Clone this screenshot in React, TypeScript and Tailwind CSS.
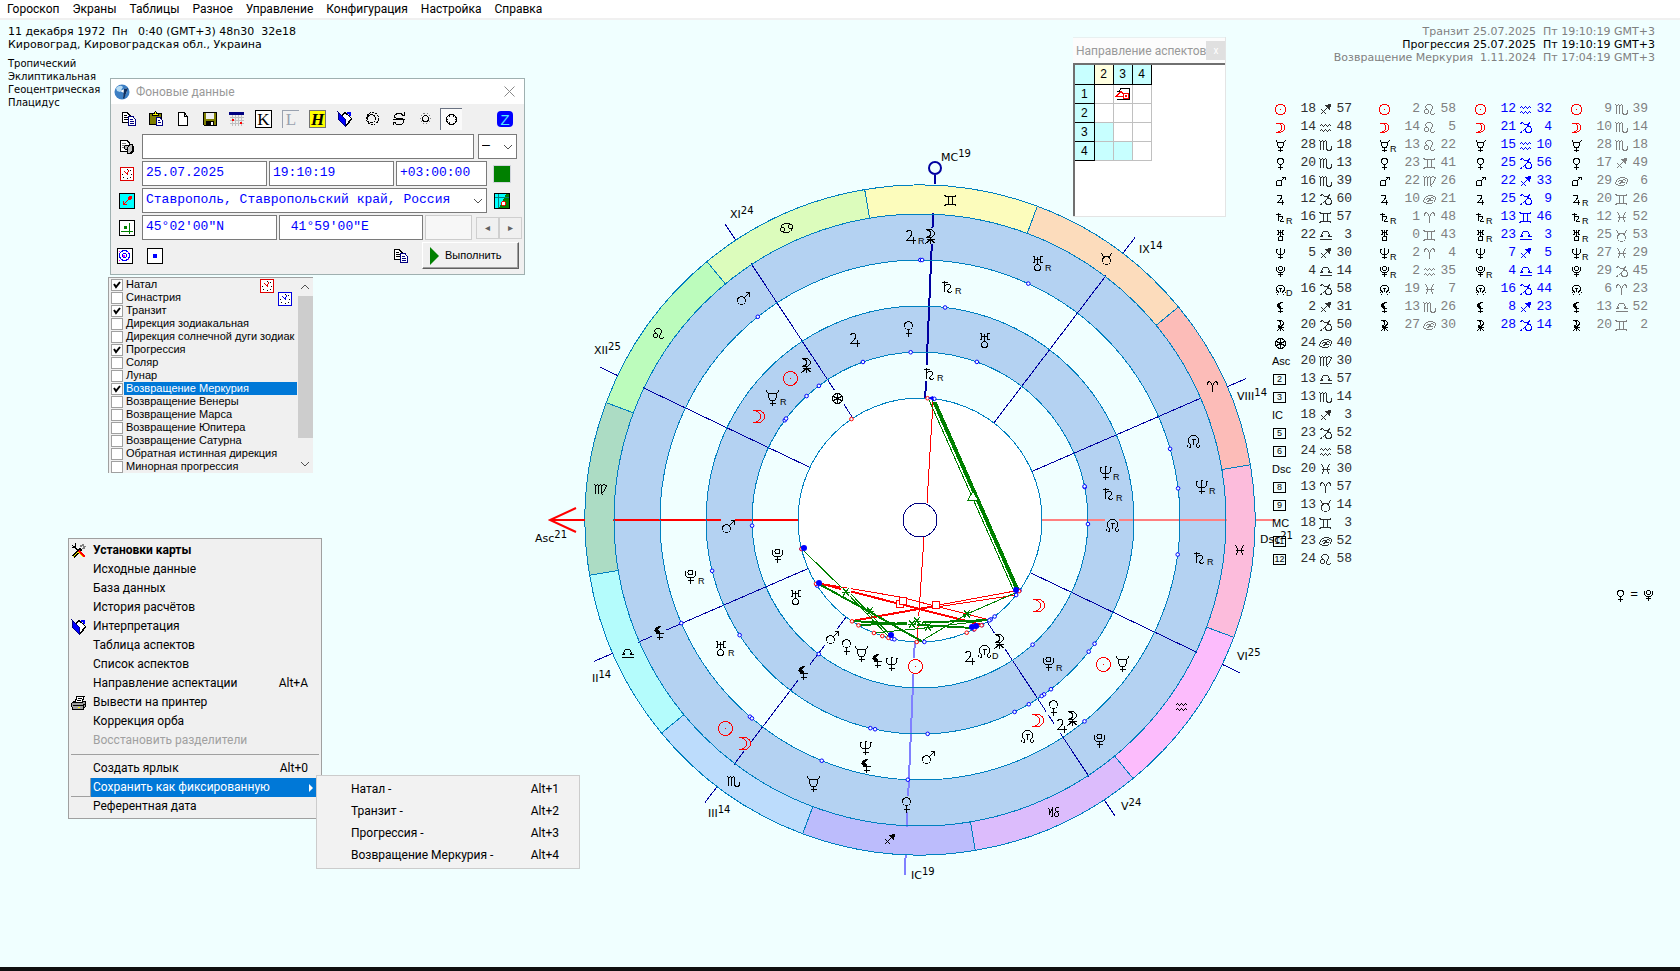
import type { ReactNode } from "react";

type Row = [planet: string, deg: number, sign: string, min: number, mark?: string];
type Placed = [glyph: string, x: number, y: number, mark?: string];

const SIGNS = ["aries", "taurus", "gemini", "cancer", "leo", "virgo", "libra", "scorpio", "sagittarius", "capricorn", "aquarius", "pisces"];

const SIGN_COLORS = [
  "#fcbcb8", "#fcdcbc", "#fcfcbc", "#dcfcbc", "#bcfcbc", "#acdcc4",
  "#b4fcfc", "#bcdcfc", "#bcbcfc", "#dcbcfc", "#fcbcfc", "#fcbcdc",
];

const GLYPHS: Record<string, ReactNode> = {
  sun: <><circle r="7" /><rect x="-0.500" y="-0.500" width="1" height="1" fill="currentColor" stroke="none" /></>,
  moon: <path d="M-6 -6H0A6 6 0 0 1 0 6H-6M-6 -6H-3Q2 -4 2 0Q2 4 -3 6" />,
  mercury: <path d="M-6 -8V-6L-4 -4H4L6 -6V-8M-4 -4V0L-2 3H2L4 0V-4M0 3V8M-3 6H3" />,
  venus: <><circle cy="-3" r="4" /><path d="M0 1V8M-3 5H3" /></>,
  mars: <><circle cx="-2" cy="2" r="4" /><path d="M1 -1L6 -6M2 -6H6V-2" /></>,
  jupiter: <path d="M-4 -4L-3 -6H0L1 -5V-2L0 0L-4 4H5M3 0V7" />,
  saturn: <path d="M-3 -6V5M-6 -4H0M-3 0L-1 -2H2L3 -1V1L0 4V5L2 6L5 5" />,
  uranus: <><circle cy="4" r="3" /><path d="M-5 -7H-3V-1H-5M5 -7H3V-1H5M-3 -4H3M0 -7V1" /></>,
  neptune: <path d="M-6 -5H-4M4 -5H6M-1 -6H1M-5 -6V-1L-3 1H3L5 -1V-6M0 -7V7M-3 5H3" />,
  pluto: <><circle cy="-4" r="2.500" /><path d="M-5 -6V-1L-3 1H3L5 -1V-6M0 1V7M-3 4H3" /></>,
  node: <><path d="M-3 5V3L-5 1V-3L-2 -6H2L5 -3V1L3 3V5M-5 6H-3M3 6H5M-6 5V3M6 5V3M-2 -2H2M0 -2V3" /></>,
  lilith: <><path d="M4 -7H0L-4 -5L-5 -2L-3 1L0 2L4 1L1 0L-1 -3L1 -6Z" fill="currentColor" stroke="none" /><path d="M0 1V7M-3 5H3" /></>,
  chiron: <path d="M-4 -7H1L4 -4V-2L1 1H-4M-4 -7L0 -5V-1L-4 1M0 1V7M-4 3H4M-5 7L0 3L5 7" />,
  fortune: <><circle r="5" /><path d="M0 -5V5M-4 -2L4 2M-4 2L4 -2" /></>,
  aries: <path d="M-5 -2V-3L-4 -5H-3L-1 -3L0 0V5M0 0L1 -3L3 -5H4L5 -3V-2" />,
  taurus: <><circle cy="2" r="4" /><path d="M-5 -5L-3 -2H3L5 -5" /></>,
  gemini: <path d="M-6 -5L-4 -4H4L6 -5M-6 5L-4 4H4L6 5M-2 -4V4M2 -4V4" />,
  cancer: <><circle cx="-4" cy="2" r="2" /><circle cx="4" cy="-1" r="2" /><path d="M-6 0L-4 -3L-1 -4H3L6 -2M6 1L4 4L1 5H-3L-6 3" /></>,
  leo: <><circle cx="-3" cy="2" r="2" /><path d="M-2 0L-4 -2V-3L-2 -5H1L3 -3V-1L1 2V4L2 5H4L5 4" /></>,
  virgo: <path d="M-6 -5L-5 -4V4M-5 -3L-3 -5L-2 -4V4M-2 -3L0 -5L1 -4V4L3 6M1 -3L3 -5L6 -4L4 1L0 5" />,
  libra: <path d="M-6 4H6M-6 1H-3L-4 -1L-2 -4H2L4 -1L3 1H6" />,
  scorpio: <path d="M-6 -5L-5 -4V4M-5 -3L-3 -5L-2 -4V4M-2 -3L0 -5L1 -4V3L2 5H4L6 4V1M5 2L6 1L7 2" />,
  sagittarius: <><path d="M-5 5L4 -4M-4 0L1 5" /><path d="M0 -4L5 -5L4 0Z" fill="currentColor" /></>,
  capricorn: <path d="M-6 -4H-5L-4 -3V2L-1 -5V3L-2 5M5 -5H3L2 -4V-2L5 1V3L4 4H2L1 3V1L3 -1H5" />,
  seagoat: <><path d="M-5 -4L-3 -5L-1 -3H2L4 -5L2 -1L-3 4L-5 5H-6M2 -1H5" /><circle cx="3" cy="2" r="3" /></>,
  crab: <path d="M-6 1L-4 -2L-1 -4H3L6 -2V0L4 3L1 4H-3L-6 2ZM-4 1L-2 -1H0V1L-2 2M5 -1L2 -2L1 -1V1H3" />,
  aquarius: <path d="M-6 -1L-4 -3L-2 -1L0 -3L2 -1L4 -3L6 -1M-6 4L-4 2L-2 4L0 2L2 4L4 2L6 4" />,
  pisces: <path d="M-4 -5L-2 -2V2L-4 5M4 -5L2 -2V2L4 5M-4 0H4" />,
};

const natal: Row[] = [
  ["sun", 18, "sagittarius", 57], ["moon", 14, "aquarius", 48], ["mercury", 28, "scorpio", 18],
  ["venus", 20, "scorpio", 13], ["mars", 16, "scorpio", 39], ["jupiter", 12, "capricorn", 60],
  ["saturn", 16, "gemini", 57, "R"], ["uranus", 22, "libra", 3], ["neptune", 5, "sagittarius", 30],
  ["pluto", 4, "libra", 14], ["node", 16, "capricorn", 58, "D"], ["lilith", 2, "sagittarius", 31],
  ["chiron", 20, "capricorn", 50], ["fortune", 24, "cancer", 40],
];

const houses: Row[] = [
  ["Asc", 20, "virgo", 30], ["2", 13, "libra", 57], ["3", 13, "scorpio", 14], ["IC", 18, "sagittarius", 3],
  ["5", 23, "capricorn", 52], ["6", 24, "aquarius", 58], ["Dsc", 20, "pisces", 30], ["8", 13, "aries", 57],
  ["9", 13, "taurus", 14], ["MC", 18, "gemini", 3], ["11", 23, "cancer", 52], ["12", 24, "leo", 58],
];

const transit: Row[] = [
  ["sun", 2, "leo", 58], ["moon", 14, "leo", 5], ["mercury", 13, "leo", 22, "R"], ["venus", 23, "gemini", 41],
  ["mars", 22, "virgo", 26], ["jupiter", 10, "cancer", 21], ["saturn", 1, "aries", 48, "R"],
  ["uranus", 0, "gemini", 43], ["neptune", 2, "aries", 4, "R"], ["pluto", 2, "aquarius", 35, "R"],
  ["node", 19, "pisces", 7], ["lilith", 13, "scorpio", 26], ["chiron", 27, "cancer", 30],
];

const progression: Row[] = [
  ["sun", 12, "aquarius", 32], ["moon", 21, "capricorn", 4], ["mercury", 15, "aquarius", 10],
  ["venus", 25, "capricorn", 56], ["mars", 22, "sagittarius", 33], ["jupiter", 25, "capricorn", 9],
  ["saturn", 13, "gemini", 46, "R"], ["uranus", 23, "libra", 3, "R"], ["neptune", 7, "sagittarius", 5],
  ["pluto", 4, "libra", 14, "R"], ["node", 16, "capricorn", 44], ["lilith", 8, "sagittarius", 23],
  ["chiron", 28, "capricorn", 14],
];

const mercuryReturn: Row[] = [
  ["sun", 9, "scorpio", 39], ["moon", 10, "scorpio", 14], ["mercury", 28, "scorpio", 18],
  ["venus", 17, "sagittarius", 49], ["mars", 29, "cancer", 6], ["jupiter", 20, "gemini", 26, "R"],
  ["saturn", 12, "pisces", 52, "R"], ["uranus", 25, "taurus", 53, "R"], ["neptune", 27, "pisces", 29, "R"],
  ["pluto", 29, "capricorn", 45], ["node", 6, "aries", 23], ["lilith", 13, "libra", 52],
  ["chiron", 20, "gemini", 2],
];

const chartPlanets: Placed[] = [
  ["mars", 743, 298], ["sun", 790, 378], ["chiron", 806, 365], ["mercury", 772, 397, "R"], ["moon", 758, 416],
  ["jupiter", 854, 339], ["venus", 908, 328], ["fortune", 837, 398], ["saturn", 929, 373, "R"],
  ["jupiter", 910, 236, "R"], ["chiron", 930, 236], ["mars", 728, 526], ["saturn", 947, 286, "R"],
  ["uranus", 1037, 263, "R"], ["uranus", 984, 340], ["node", 1193, 441], ["neptune", 1105, 472, "R"],
  ["saturn", 1108, 493, "R"], ["node", 1112, 525], ["neptune", 1201, 486, "R"], ["pluto", 777, 555],
  ["pluto", 690, 576, "R"], ["uranus", 795, 597], ["lilith", 659, 632], ["uranus", 720, 648, "R"],
  ["mars", 832, 637], ["venus", 846, 646], ["mercury", 861, 653], ["lilith", 877, 660], ["neptune", 891, 663],
  ["lilith", 803, 672], ["sun", 915, 666], ["sun", 725, 728], ["moon", 744, 743], ["neptune", 865, 747],
  ["lilith", 866, 765], ["mercury", 813, 783], ["mars", 928, 757], ["venus", 906, 804], ["moon", 1038, 605],
  ["jupiter", 969, 657], ["node", 984, 651, "D"], ["chiron", 999, 641], ["pluto", 1048, 663, "R"],
  ["sun", 1103, 664], ["mercury", 1122, 663], ["venus", 1053, 707], ["moon", 1037, 720], ["node", 1027, 736],
  ["jupiter", 1061, 725], ["chiron", 1072, 718], ["pluto", 1099, 740], ["saturn", 1199, 557, "R"],
];

const cuspLabels: [string, string, number, number][] = [
  ["MC", "19", 941, 161], ["XI", "24", 730, 218], ["XII", "25", 594, 354], ["Asc", "21", 535, 542],
  ["II", "14", 592, 682], ["III", "14", 708, 817], ["IC", "19", 911, 879], ["V", "24", 1121, 810],
  ["VI", "25", 1237, 660], ["Dsc", "21", 1260, 543], ["VIII", "14", 1237, 400], ["IX", "14", 1139, 253],
];

const CX = 920;
const CY = 520;
const RED = "#ff0000";

const longitude = ([, deg, sign, min]: Row) => SIGNS.indexOf(sign) * 30 + deg + min / 60;
const ASC = longitude(houses[0]);

// ecliptic longitude + radius to chart coordinates, Asc on the left
function point(lon: number, r: number) {
  const a = ((180 + lon - ASC) * Math.PI) / 180;
  return { x: CX + r * Math.cos(a), y: CY - r * Math.sin(a) };
}

function ringColor(x: number, y: number) {
  const r = Math.hypot(x - CX, y - CY);
  return (r > 260 && r < 306) || (r > 168 && r < 214) ? "#b4d2f2" : "#f0ffff";
}

function glyphColor(name: string) {
  return name === "sun" || name === "moon" ? RED : "#000000";
}

function Glyph({ name, x = 0, y = 0, scale = 1, color }: { name: string; x?: number; y?: number; scale?: number; color: string }) {
  return (
    <g
      transform={`translate(${x + 0.5} ${y + 0.5}) scale(${scale})`}
      fill="none"
      stroke="currentColor"
      color={color}
      strokeWidth={1 / scale}
    >
      {GLYPHS[name]}
    </g>
  );
}

function Chart() {
  const rings: [number, string][] = [[306, "#b4d2f2"], [260, "#f0ffff"], [214, "#b4d2f2"], [168, "#f0ffff"], [122, "#ffffff"]];
  const dots: [Row[], number, string][] = [
    [mercuryReturn, 260, "#0000ff"], [progression, 214, "#0000ff"], [transit, 168, "#0000ff"],
    [progression, 122, "#0000ff"], [natal, 122, RED],
  ];

  return (
    <svg viewBox="540 20 720 860" className="h-[860px] min-w-0 flex-1 overflow-visible" role="img" aria-label="Карта">
      {/* zodiac belt */}
      {SIGNS.map((sign, i) => {
        const a = point(i * 30, 335);
        const b = point(i * 30 + 30, 335);
        return (
          <path
            key={sign}
            d={`M${CX} ${CY}L${a.x} ${a.y}A335 335 0 0 0 ${b.x} ${b.y}Z`}
            fill={SIGN_COLORS[i]}
            stroke="#0080c0"
            shapeRendering="crispEdges"
          />
        );
      })}
      {rings.map(([r, fill]) => <circle key={r} cx={CX} cy={CY} r={r} fill={fill} />)}

      {/* house cusps */}
      {houses.map((house) => {
        const lon = longitude(house);
        const inner = point(lon, 122);
        const outer = point(lon, 307);
        const t1 = point(lon, 335);
        const t2 = point(lon, 355);
        const axis: Record<string, string> = { Asc: RED, Dsc: "#ff8080", IC: "#8080ff", MC: "#0000a0" };
        const stroke = axis[house[0]] ?? "#0000a0";
        return (
          <g key={house[0]} stroke={stroke} strokeWidth={axis[house[0]] ? 2 : 1} shapeRendering="crispEdges">
            <line x1={inner.x} y1={inner.y} x2={outer.x} y2={outer.y} />
            {!["Asc", "Dsc", "MC"].includes(house[0]) && <line x1={t1.x} y1={t1.y} x2={t2.x} y2={t2.y} />}
          </g>
        );
      })}
      <path d="M585 520H550M576 508L550 520L576 532" fill="none" stroke={RED} strokeWidth="2" />
      <path d="M1256 520H1276" stroke="#ff8080" strokeWidth="2" />
      <g fill="none" stroke="#0000a0" strokeWidth="2">
        <circle cx="935" cy="168" r="6" />
        <path d="M935 175V184" />
      </g>

      {chartPlanets.map(([name, x, y]) => (
        <rect key={`${x}-${y}`} x={x - 7} y={y - 8} width="14" height="16" fill={ringColor(x, y)} />
      ))}

      <g fill="none" stroke="#0080c0" shapeRendering="crispEdges">
        {rings.map(([r]) => <circle key={r} cx={CX} cy={CY} r={r} />)}
      </g>
      <circle cx={CX} cy={CY} r="17" fill="none" stroke="#000080" shapeRendering="crispEdges" />

      {/* aspects */}
      <g fill="none" stroke={RED} shapeRendering="crispEdges">
        <path d="M933 402L927 503M924 537L917 642" />
        <path d="M818 583L982 625" strokeWidth="2" />
        <path d="M818 583L900 597L990 620M928 607L1015 591M930 608L1016 595" />
        <path d="M852 621L924 608L940 605" strokeWidth="2" />
      </g>
      <g fill="none" stroke="#008000" shapeRendering="crispEdges">
        <path d="M935 402L1018 590" strokeWidth="3" />
        <path d="M929 400L1013 589M932 400L1016 590" />
        <path d="M803 550L846 592L888 636M849 592L893 638M923 640L967 614L1015 593M874 633L925 628L990 620" />
        <path d="M819 584L870 612L923 642" strokeWidth="2" />
        <path d="M852 621L973 628M858 625L989 620" strokeWidth="2" />
      </g>
      <g fill="#ffffff" stroke="none">
        {[[846, 592], [912, 624], [917, 620]].map(([x, y]) => (
          <rect key={x} x={x - 5} y={y - 4} width="10" height="8" />
        ))}
      </g>
      <g fill="#ffffff" stroke="#008000" shapeRendering="crispEdges">
        <path d="M968 500L973 491L978 500Z" />
        {[[846, 592], [870, 611], [912, 624], [917, 621], [967, 614], [928, 627]].map(([x, y]) => (
          <path key={x} d={`M${x - 4} ${y}H${x + 4}M${x - 3} ${y - 4}L${x + 3} ${y + 4}M${x - 3} ${y + 4}L${x + 3} ${y - 4}`} />
        ))}
      </g>
      <g fill="#ffffff" stroke={RED} shapeRendering="crispEdges">
        <rect x="896" y="600" width="7" height="7" />
        <rect x="899" y="597" width="7" height="7" />
        <rect x="932" y="601" width="7" height="7" />
      </g>

      {dots.map(([rows, r, color]) =>
        rows.map((row) => {
          const p = point(longitude(row), r);
          return <circle key={`${r}${color}${row[0]}`} cx={p.x} cy={p.y} r="1.800" fill="#f0ffff" stroke={color} />;
        })
      )}
      <g fill="#0000ff">
        {[[804, 548], [819, 583], [891, 635], [1016, 590], [972, 627], [976, 626]].map(([x, y]) => (
          <circle key={x} cx={x} cy={y} r="3" />
        ))}
        <path d="M928 398L933 396L934 401Z" />
      </g>

      {/* glyphs */}
      <g shapeRendering="crispEdges">
        {SIGNS.map((sign, i) => {
          const p = point(i * 30 + 15, 321);
          return <Glyph key={sign} name={sign} x={Math.floor(p.x)} y={Math.floor(p.y)} color="#000000" />;
        })}
        {chartPlanets.map(([name, x, y]) => <Glyph key={`${x}-${y}`} name={name} x={x} y={y} color={glyphColor(name)} />)}
      </g>
      <g className="font-['Liberation_Sans',sans-serif] text-[9px]">
        {chartPlanets.map(([, x, y, mark]) => mark && <text key={`${x}-${y}`} x={x + 8} y={y + 8}>{mark}</text>)}
      </g>
      <g className="font-['DejaVu_Sans',sans-serif] text-[11px]">
        {cuspLabels.map(([label, deg, x, y]) => (
          <text key={label} x={x} y={y}>
            {label}
            <tspan dy="-4" className="text-[10px]">{deg}</tspan>
          </text>
        ))}
      </g>
    </svg>
  );
}

function RowName({ name, mark }: { name: string; mark?: string }) {
  if (GLYPHS[name]) {
    return (
      <svg viewBox="-8 -9 24 18" className="h-[18px] w-6" shapeRendering="crispEdges">
        <Glyph name={name} scale={name === "fortune" ? 1 : 0.75} color={glyphColor(name)} />
        {mark && <text x="6" y="7" className="font-['Liberation_Sans',sans-serif] text-[9px]">{mark}</text>}
      </svg>
    );
  }
  if (/^\d/.test(name)) {
    return (
      <span className="ml-px flex w-[13px] justify-center border border-black text-[9px] leading-[9px]">{name}</span>
    );
  }
  return <span className="block text-[11px]">{name}</span>;
}

function PositionTable({ rows, color, title }: { rows: Row[]; color: string; title: string }) {
  return (
    <table aria-label={title} className="w-24 shrink-0 table-fixed border-collapse font-['Liberation_Sans',sans-serif] leading-[18px]">
      <tbody>
        {rows.map(([name, deg, sign, min, mark]) => (
          <tr key={name} className="h-[18px]">
            <th scope="row" className="w-6 p-0 text-left font-normal whitespace-nowrap">
              <RowName name={name} mark={mark} />
            </th>
            <td className={`w-5 p-0 text-right font-['Liberation_Mono',monospace] text-[13px] ${color}`}>{deg}</td>
            <td className={`w-[18px] p-0 ${color}`}>
              <svg viewBox="-9 -9 18 18" className="size-[18px]" shapeRendering="crispEdges">
                <Glyph name={sign === "capricorn" ? "seagoat" : sign === "cancer" ? "crab" : sign} color="currentColor" />
              </svg>
            </td>
            <td className={`w-[18px] p-0 text-right font-['Liberation_Mono',monospace] text-[13px] ${color}`}>{min}</td>
            <td className="p-0" />
          </tr>
        ))}
      </tbody>
    </table>
  );
}

/* icons */
function Icon({ children }: { children: ReactNode }) {
  return <svg viewBox="0 0 16 16" className="size-4 shrink-0" fill="none" stroke="#000000" shapeRendering="crispEdges">{children}</svg>;
}

const CopyIcon = () => (
  <Icon>
    <path d="M1.500 1.500H6L9 4.500V11.500H1.500Z" fill="#ffffff" />
    <path d="M3 4.500H6M3 6.500H7M3 8.500H7" />
    <path d="M7.500 5.500H12L14.500 8.500V14.500H7.500Z" fill="#ffffff" stroke="#000080" />
    <path d="M9 8.500H12M9 10.500H13M9 12.500H13" stroke="#000080" />
  </Icon>
);
const PasteIcon = () => (
  <Icon>
    <rect x="1.500" y="2.500" width="12" height="11" fill="#808000" />
    <path d="M4.500 4.500V2.500H6L7.500 0.500L9 2.500H10.500V4.500Z" fill="#ffff00" />
    <path d="M8.500 6.500H12L14.500 9.500V14.500H8.500Z" fill="#ffffff" stroke="#000080" />
    <path d="M10 9.500H12M10 11.500H13" stroke="#000080" />
  </Icon>
);
const PageIcon = () => <Icon><path d="M3.500 1.500H9L12.500 5.500V14.500H3.500ZM9 1.500V5.500H13" fill="#ffffff" /></Icon>;
const SaveIcon = () => (
  <Icon>
    <path d="M1.500 1.500H14.500V14.500H2.500L1.500 13.500Z" fill="#808000" />
    <rect x="4" y="2" width="8" height="6" fill="#f0f0f0" stroke="none" />
    <rect x="4" y="10" width="8" height="4" fill="#000000" stroke="none" />
    <rect x="9" y="11" width="2" height="3" fill="#ffffff" stroke="none" />
  </Icon>
);
const CalendarIcon = () => (
  <Icon>
    <rect x="0" y="1" width="15" height="3" fill="#000080" stroke="none" />
    <path d="M1 6.500H15M1 9.500H15M1 12.500H15M3.500 4V15M6.500 4V15M9.500 4V15M12.500 4V15" stroke="#c0c0c0" />
    <path d="M3 8h2v2h-2zM11 11h2v2h-2z" fill={RED} stroke="none" />
  </Icon>
);
const BookIcon = () => (
  <Icon>
    <path d="M6 3.500L8 1.500L14.500 7.500L9 14.500L5 10Z" fill="#ffffff" />
    <path d="M1 1L8 8V15L2 9Z" fill="#0000ff" stroke="#000080" />
    <path d="M10 2H13V5" stroke="#0000ff" strokeWidth="2" />
    <path d="M9 15L15 8" />
  </Icon>
);
const ArrowsIcon = () => (
  <Icon>
    <circle cx="7.500" cy="7.500" r="4" /><circle cx="8.500" cy="7.500" r="6" strokeDasharray="2 1" />
  </Icon>
);
const CycleIcon = () => (
  <Icon>
    <path d="M13.500 1V4.500H12M12 4.500L10 2.500H6L3.500 4.500V6L5.500 7.500H11L12.500 9.500V11.500L10.500 13.500H6L3 11.500M2 8.500H14M2.500 14V11.500H5" />
  </Icon>
);
const RingIcon = () => (
  <Icon><circle cx="7.500" cy="7.500" r="3" /><circle cx="7.500" cy="7.500" r="5" stroke="#808080" strokeDasharray="1 2" /></Icon>
);
const GearRingIcon = () => (
  <Icon><circle cx="7.500" cy="7.500" r="5" /><circle cx="7.500" cy="7.500" r="4" strokeDasharray="1 3" /></Icon>
);
const PeopleIcon = () => (
  <Icon>
    <path d="M1.500 1.500H8L10.500 4V12.500H1.500Z" fill="#ffffff" />
    <path d="M3 4.500H7M3 6.500H6M3 8.500H6" stroke="#808080" />
    <circle cx="7.500" cy="8.500" r="2" fill="#c0c0c0" />
    <path d="M9.500 6.500L13 5.500L14.500 8L13 14L9 14.500L8 11Z" fill="#c0c0c0" />
    <path d="M14 7V12L11 15" strokeWidth="2" />
  </Icon>
);
const ClockIcon = ({ color }: { color: string }) => (
  <Icon>
    <rect x="1.500" y="1.500" width="13" height="13" fill="#ffffff" stroke={color} />
    <path d="M5.500 5.500L8.500 8.500L9.500 4.500" stroke={color} />
    <path d="M8 3h1v1h-1zM12 8h1v1h-1zM8 12h1v1h-1zM3 8h1v1h-1zM4 11h1v1h-1zM11 11h1v1h-1zM11 4h1v1h-1z" fill="#000000" stroke="none" />
  </Icon>
);
const RouteIcon = () => (
  <Icon>
    <rect x="0.500" y="0.500" width="15" height="15" fill="#00ffff" />
    <path d="M4.500 11.500L10 6M4.500 8V11.500H8" stroke={RED} /><circle cx="11" cy="5" r="2" fill={RED} stroke="none" />
  </Icon>
);
const MapIcon = () => (
  <Icon>
    <rect x="0.500" y="0.500" width="15" height="15" fill="#008000" />
    <path d="M1 1H12L5 15H1Z" fill="#00ffff" stroke="none" />
    <path d="M1 4.500H15M4.500 1V15" stroke="#008080" />
    <circle cx="9.500" cy="10.500" r="2" fill="#ffffff" stroke={RED} />
  </Icon>
);
const PinIcon = () => (
  <Icon>
    <rect x="0.500" y="0.500" width="15" height="15" fill="#ffffff" />
    <path d="M2 11.500H14M10.500 3V14" stroke="#008000" /><path d="M5 6h3v3h-3z" fill="#008000" stroke="none" />
  </Icon>
);
const WheelIcon = () => (
  <Icon>
    <rect x="0.500" y="0.500" width="15" height="15" fill="#ffffff" />
    <circle cx="7.500" cy="7.500" r="5" stroke="#0000ff" /><circle cx="7.500" cy="7.500" r="2" stroke="#0000ff" />
    <path d="M2 13L14 2M2 3L13 13" stroke="#ff00ff" strokeDasharray="2 4" />
  </Icon>
);
const DotIcon = () => (
  <Icon><rect x="0.500" y="0.500" width="15" height="15" fill="#ffffff" /><circle cx="8" cy="8" r="2.500" fill="#0000ff" stroke="none" /></Icon>
);
const ToolsIcon = () => (
  <Icon>
    <path d="M2 14L10 6" strokeWidth="3" /><path d="M2 14L9 7" stroke="#ffff00" />
    <path d="M9 3L13 2M12 6L14 3" strokeWidth="2" stroke="#808080" />
    <path d="M1 2L8 8" /><path d="M8 8L14 14" stroke="#ff0000" strokeWidth="2" /><path d="M7 9L12 14" stroke="#ffff00" />
    <path d="M4 0L4 4L1 5" />
  </Icon>
);
const PrinterIcon = () => (
  <Icon>
    <path d="M0.500 8.500L3 6.500H14.500V11L12 14.500H1.500Z" fill="#a0a0a0" />
    <path d="M4 7.500L6 1.500H13L11 7.500Z" fill="#ffffff" />
    <path d="M7 3.500H11M6 5.500H10M1.500 10.500H12L15 8M12.500 10V14" />
    <path d="M7 12.500H9" stroke="#ffff00" />
  </Icon>
);

const LetterIcon = ({ className, children }: { className: string; children: string }) => (
  <span className={`flex h-[18px] w-[17px] items-center justify-center font-['Liberation_Serif',serif] text-[17px] leading-none ${className}`}>{children}</span>
);

const toolbar: [string, ReactNode][] = [
  ["Копировать", <CopyIcon />], ["Вставить", <PasteIcon />], ["Новый", <PageIcon />], ["Сохранить", <SaveIcon />],
  ["Календарь", <CalendarIcon />],
  ["Карта", <LetterIcon className="border border-black bg-white">K</LetterIcon>],
  ["Место", <LetterIcon className="border-t border-l border-gray-400 text-gray-400">L</LetterIcon>],
  ["Гороскоп", <LetterIcon className="border border-neutral-500 bg-[#ffff00] font-bold italic">H</LetterIcon>],
  ["Интерпретация", <BookIcon />], ["Кольца", <ArrowsIcon />], ["Цикл", <CycleIcon />], ["Кольцо", <RingIcon />],
];

function Chevron({ className }: { className: string }) {
  return (
    <svg viewBox="0 0 10 6" className={`pointer-events-none h-1.5 w-2.5 ${className}`} fill="none" stroke="#505050">
      <path d="M1 1L5 5L9 1" />
    </svg>
  );
}

const field = "h-[25px] min-w-0 border border-[#7a7a7a] bg-white px-[3px] pb-[2px] font-['Liberation_Mono',monospace] text-[13px] text-[#0000ff] outline-none";

function DataWindow() {
  return (
    <form
      aria-label="Фоновые данные"
      onSubmit={(e) => e.preventDefault()}
      className="absolute top-[58px] left-[110px] flex h-[197px] w-[415px] flex-col border border-[#9fb0b0] bg-[#f0f0f0] font-[Roboto,sans-serif] text-[12px]"
    >
      <div className="flex h-[25px] shrink-0 items-center gap-[6px] bg-white px-[3px] text-[#999999]">
        <svg viewBox="0 0 16 16" className="size-4">
          <circle cx="8" cy="8" r="7.500" fill="#3d7fc4" />
          <path d="M2 4Q6 0 9 3L6 8L3 7Z" fill="#b8dcf4" />
          <path d="M6 7L13 4Q14 8 9 14L10 9Z" fill="#ffffff" />
          <path d="M10 5L14 4L10 15L9 14Z" fill="#103060" />
        </svg>
        <h2>Фоновые данные</h2>
        <button type="button" aria-label="Закрыть" className="mr-[6px] ml-auto">
          <svg viewBox="0 0 11 11" className="size-[11px]" stroke="#888888"><path d="M0.500 0.500L10.500 10.500M10.500 0.500L0.500 10.500" /></svg>
        </button>
      </div>

      <div className="flex h-[30px] shrink-0 items-center gap-[10px] pl-[9px]">
        {toolbar.map(([label, icon]) => (
          <button key={label} type="button" aria-label={label} className="flex w-[17px] justify-center">{icon}</button>
        ))}
        <button type="button" aria-label="Внешнее кольцо" className="-ml-1 flex size-[22px] items-center justify-center border-t border-l border-gray-500 bg-neutral-50">
          <GearRingIcon />
        </button>
        <button type="button" aria-label="ZET" className="ml-auto mr-[11px] flex size-4 items-center justify-center rounded-sm bg-[#0000ff] font-['Liberation_Sans',sans-serif] text-[15px] leading-none text-cyan-300">Z</button>
      </div>

      <div className="flex flex-col gap-[2px] pl-2">
        <div className="flex items-center">
          <span className="w-[23px]"><PeopleIcon /></span>
          <input aria-label="Имя" className={`${field} w-[332px]`} />
          <span className="relative ml-1 flex items-center">
            <select aria-label="Пол" className={`${field} w-[39px] appearance-none text-black`}><option>—</option></select>
            <Chevron className="absolute right-1" />
          </span>
        </div>
        <div className="flex items-center gap-[2px]">
          <span className="w-[21px]"><ClockIcon color="#e00000" /></span>
          <input aria-label="Дата" defaultValue="25.07.2025" className={`${field} w-[125px]`} />
          <input aria-label="Время" defaultValue="19:10:19" className={`${field} w-[125px]`} />
          <input aria-label="Часовой пояс" defaultValue="+03:00:00" className={`${field} w-[91px]`} />
          <button type="button" aria-label="Поясное время" className="ml-1 size-[18px] border border-gray-300 bg-[#008000]" />
        </div>
        <div className="flex items-center">
          <span className="w-[23px]"><RouteIcon /></span>
          <span className="relative flex items-center">
            <select aria-label="Место" className={`${field} w-[345px] appearance-none`}>
              <option>Ставрополь, Ставропольский край, Россия</option>
            </select>
            <Chevron className="absolute right-1" />
          </span>
          <button type="button" aria-label="Атлас" className="ml-[7px]"><MapIcon /></button>
        </div>
        <div className="flex items-center gap-[2px]">
          <span className="w-[21px]"><PinIcon /></span>
          <input aria-label="Широта" defaultValue={"45°02'00\"N"} className={`${field} w-[135px]`} />
          <input aria-label="Долгота" defaultValue={" 41°59'00\"E"} className={`${field} w-[144px]`} />
          <input aria-label="Высота" disabled className="h-[25px] w-[47px] border border-[#cccccc] bg-[#f7f7f7]" />
          <div className="ml-[2px] flex">
            {["◂", "▸"].map((arrow) => (
              <button key={arrow} type="button" className="h-[22px] w-[23px] border border-[#cfcfcf] bg-[#f0f0f0] text-[10px] text-[#606060]">{arrow}</button>
            ))}
          </div>
        </div>
        <div className="flex items-center">
          <button type="button" aria-label="Колесо" className="-ml-0.5 w-[30px]"><WheelIcon /></button>
          <button type="button" aria-label="Точка"><DotIcon /></button>
          <button type="button" aria-label="Копировать данные" className="mr-[13px] ml-auto"><CopyIcon /></button>
          <button type="submit" className="mr-[5px] flex h-[27px] w-[97px] items-center gap-[6px] border border-t-white border-r-[#606060] border-b-[#606060] border-l-white bg-[#f0f0f0] pl-[7px] font-['Liberation_Sans',sans-serif] text-[11px] shadow-[inset_-1px_-1px_0_#a0a0a0]">
            <svg viewBox="0 0 9 18" className="h-[18px] w-[9px]" fill="#008000"><path d="M0 0L9 9L0 18Z" /></svg>
            Выполнить
          </button>
        </div>
      </div>
    </form>
  );
}

const layers: [string, boolean][] = [
  ["Натал", true], ["Синастрия", false], ["Транзит", true], ["Дирекция зодиакальная", false],
  ["Дирекция солнечной дуги зодиак", false], ["Прогрессия", true], ["Соляр", false], ["Лунар", false],
  ["Возвращение Меркурия", true], ["Возвращение Венеры", false], ["Возвращение Марса", false],
  ["Возвращение Юпитера", false], ["Возвращение Сатурна", false], ["Обратная истинная дирекция", false],
  ["Минорная прогрессия", false],
];

function LayerList() {
  return (
    <div className="absolute top-[257px] left-[108px] flex w-[205px] border-t border-l border-[#a0a0a0] bg-[#f0f0f0] font-['Liberation_Sans',sans-serif] text-[11px] leading-[13px]">
      <ul className="min-w-0 flex-1">
        {layers.map(([label, checked]) => (
          <li key={label}>
            <label className="flex h-[13px] items-center gap-px">
              <span className="relative ml-0.5 flex shrink-0">
                <input type="checkbox" defaultChecked={checked} className="peer size-3 appearance-none border border-[#a0a0a0] bg-white" />
                <svg viewBox="0 0 12 12" className="pointer-events-none absolute hidden size-3 peer-checked:block" fill="none" stroke="#000000" strokeWidth="2">
                  <path d="M3 5L5 8L9 3" />
                </svg>
              </span>
              <span className={`flex-1 pl-0.5 whitespace-nowrap ${label === "Возвращение Меркурия" ? "bg-[#0078d7] text-white" : ""}`}>{label}</span>
            </label>
          </li>
        ))}
      </ul>
      <div className="flex w-4 flex-col items-center">
        <Chevron className="my-1.5 rotate-180" />
        <div className="h-[142px] w-[15px] bg-[#cdcdcd]" />
        <Chevron className="mt-auto mb-1.5" />
      </div>
      <button aria-label="Время натала" className="absolute top-0 left-[150px] size-4"><ClockIcon color="#e00000" /></button>
      <button aria-label="Время транзита" className="absolute top-[13px] left-[168px] size-4"><ClockIcon color="#0000e0" /></button>
    </div>
  );
}

const aspectColors: Record<string, string> = { "3-2": "bg-[#c8ffff]", "4-2": "bg-[#c8ffff]", "4-3": "bg-[#c8ffff]" };

function AspectWindow() {
  return (
    <section className="absolute top-[17px] left-[1073px] h-[180px] w-[153px] border-r border-b border-[#e4e4e4] bg-white font-[Roboto,sans-serif] text-[12px]">
      <div className="flex h-[26px] items-center border-t border-[#e8f0f0] bg-[#fcfcfc] pl-[3px] text-[#999999]">
        <h2 className="whitespace-nowrap">Направление аспектов</h2>
        <button aria-label="Закрыть" className="ml-auto flex size-[19px] shrink-0 items-center justify-center bg-[#e0e0e0] text-[10px] text-white">x</button>
      </div>
      <div className="h-[153px] border-t-2 border-l-2 border-[#707070]">
        <table className="border-collapse font-['Liberation_Sans',sans-serif] text-[12px] leading-none">
          <thead>
            <tr className="h-[19px]">
              <td className="w-[19px] border-r border-b border-black bg-[#c8ffff] p-0" />
              {["2", "3", "4"].map((n) => (
                <th key={n} scope="col" className={`w-[19px] border border-t-0 border-black p-0 font-normal ${n === "2" ? "bg-[#ffffe0]" : "bg-[#c8ffff]"}`}>{n}</th>
              ))}
            </tr>
          </thead>
          <tbody>
            {["1", "2", "3", "4"].map((row) => (
              <tr key={row} className="h-[19px]">
                <th scope="row" className="border border-l-0 border-black bg-[#c8ffff] p-0 font-normal">{row}</th>
                {["2", "3", "4"].map((col) => (
                  <td key={col} className={`border border-[#c0c0c0] p-0 ${aspectColors[`${row}-${col}`] ?? "bg-white"}`}>
                    {row === "1" && col === "3" && (
                      <svg viewBox="0 0 16 14" className="mx-auto h-[14px] w-4" fill="none" stroke={RED} shapeRendering="crispEdges">
                        <path d="M1.500 4.500H4L6 1.500H14.500V12.500H1.500" stroke="#000000" />
                        <path d="M1 9.500L6 4.500L11 9.500Z" />
                        <rect x="8.500" y="6.500" width="5" height="5" fill="#ffffff" />
                        <path d="M10 8h2v2h-2z" fill={RED} stroke="none" />
                      </svg>
                    )}
                  </td>
                ))}
              </tr>
            ))}
          </tbody>
        </table>
      </div>
    </section>
  );
}

type Item = { label: string; keys?: string; icon?: ReactNode; className?: string; disabled?: boolean; arrow?: boolean };

const contextItems: (Item | null)[] = [
  { label: "Установки карты", icon: <ToolsIcon />, className: "font-bold" },
  { label: "Исходные данные" },
  { label: "База данных" },
  { label: "История расчётов" },
  { label: "Интерпретация", icon: <BookIcon /> },
  { label: "Таблица аспектов" },
  { label: "Список аспектов" },
  { label: "Направление аспектации", keys: "Alt+A" },
  { label: "Вывести на принтер", icon: <PrinterIcon /> },
  { label: "Коррекция орба" },
  { label: "Восстановить разделители", className: "text-[#a0a0a0]", disabled: true },
  null,
  { label: "Создать ярлык", keys: "Alt+0" },
  { label: "Сохранить как фиксированную", arrow: true },
  { label: "Референтная дата" },
];

function ContextMenu() {
  return (
    <div className="absolute top-[518px] left-[68px] w-[254px] border border-[#a0a0a0] bg-[#f0f0f0] p-[2px] font-[Roboto,sans-serif] text-[12px] leading-[19px]">
      {contextItems.map((item) =>
        item ? (
          <button key={item.label} disabled={item.disabled} className={`flex h-[19px] w-full items-center text-left whitespace-nowrap ${item.className ?? ""}`}>
            <span className={`flex h-full w-5 shrink-0 items-center ${item.arrow ? "border-r border-b border-[#a0a0a0]" : ""}`}>{item.icon}</span>
            <span className={`flex h-full min-w-0 flex-1 items-center pl-[2px] ${item.arrow ? "bg-[#0078d7] pr-[6px] text-white" : "pr-[11px]"}`}>
              <span className="flex-1">{item.label}</span>
              {item.keys}
              {item.arrow && <svg viewBox="0 0 4 8" className="h-2 w-1" fill="#ffffff"><path d="M0 0L4 4L0 8Z" /></svg>}
            </span>
          </button>
        ) : (
          <hr key="line" className="my-1 border-t border-[#a0a0a0]" />
        )
      )}
    </div>
  );
}

const submenuItems = ["Натал -", "Транзит -", "Прогрессия -", "Возвращение Меркурия -"];

function SubMenu() {
  return (
    <div className="absolute top-[755px] left-[316px] w-[264px] border border-[#cccccc] bg-[#f2f2f2] p-[2px] font-[Roboto,sans-serif] text-[12px]">
      {submenuItems.map((label, i) => (
        <button key={label} className="flex h-[22px] w-full items-center justify-between pr-[18px] pl-8">
          <span>{label}</span>
          <span>{`Alt+${i + 1}`}</span>
        </button>
      ))}
    </div>
  );
}

const menu = ["Гороскоп", "Экраны", "Таблицы", "Разное", "Управление", "Конфигурация", "Настройка", "Справка"];

export default function App() {
  return (
    <div className="flex min-h-screen flex-col overflow-hidden bg-[#f0ffff] text-black">
      <nav className="flex h-5 shrink-0 items-center gap-[13px] border-b-2 border-[#f0f0f0] bg-white pl-[7px] font-[Roboto,sans-serif] text-[12px]">
        {menu.map((label) => <button key={label}>{label}</button>)}
      </nav>

      <main className="relative flex flex-1">
        <section className="w-[540px] shrink-0 pt-[5px] pl-2 font-['DejaVu_Sans',sans-serif] text-[11px] leading-[13px]">
          <p className="whitespace-pre">{"11 декабря 1972  Пн   0:40 (GMT+3) 48n30  32e18"}</p>
          <p>Кировоград, Кировоградская обл., Украина</p>
          <ul className="mt-[6px] text-[10px]">
            <li>Тропический</li>
            <li>Эклиптикальная</li>
            <li>Геоцентрическая</li>
            <li>Плацидус</li>
          </ul>
        </section>

        <Chart />

        <section className="relative w-[420px] shrink-0 pt-[5px]">
          <div className="pr-[25px] text-right font-['DejaVu_Sans',sans-serif] text-[11px] leading-[13px] whitespace-pre text-[#808080]">
            <p>{"Транзит 25.07.2025  Пт 19:10:19 GMT+3"}</p>
            <p className="text-black">{"Прогрессия 25.07.2025  Пт 19:10:19 GMT+3"}</p>
            <p>{"Возвращение Меркурия  1.11.2024  Пт 17:04:19 GMT+3"}</p>
          </div>
          <div className="mt-9 flex items-start pl-3">
            <PositionTable title="Натал" rows={[...natal, ...houses]} color="text-[#303030]" />
            <div className="flex pl-2">
              <PositionTable title="Транзит" rows={transit} color="text-[#808080]" />
              <PositionTable title="Прогрессия" rows={progression} color="text-[#0000ff]" />
              <PositionTable title="Возвращение Меркурия" rows={mercuryReturn} color="text-[#808080]" />
            </div>
          </div>
          <div className="mt-[17px] mr-6 flex items-center justify-end gap-[2px] font-['Liberation_Mono',monospace] text-[13px]">
            <svg viewBox="-8 -9 16 18" className="h-[18px] w-4" shapeRendering="crispEdges"><Glyph name="venus" scale={0.75} color="#000000" /></svg>
            =
            <svg viewBox="-8 -9 16 18" className="h-[18px] w-4" shapeRendering="crispEdges"><Glyph name="pluto" scale={0.75} color="#000000" /></svg>
          </div>
        </section>

        <AspectWindow />
        <DataWindow />
        <LayerList />
        <ContextMenu />
        <SubMenu />
      </main>

      <footer className="h-1 shrink-0 bg-[#101010]" />
    </div>
  );
}
